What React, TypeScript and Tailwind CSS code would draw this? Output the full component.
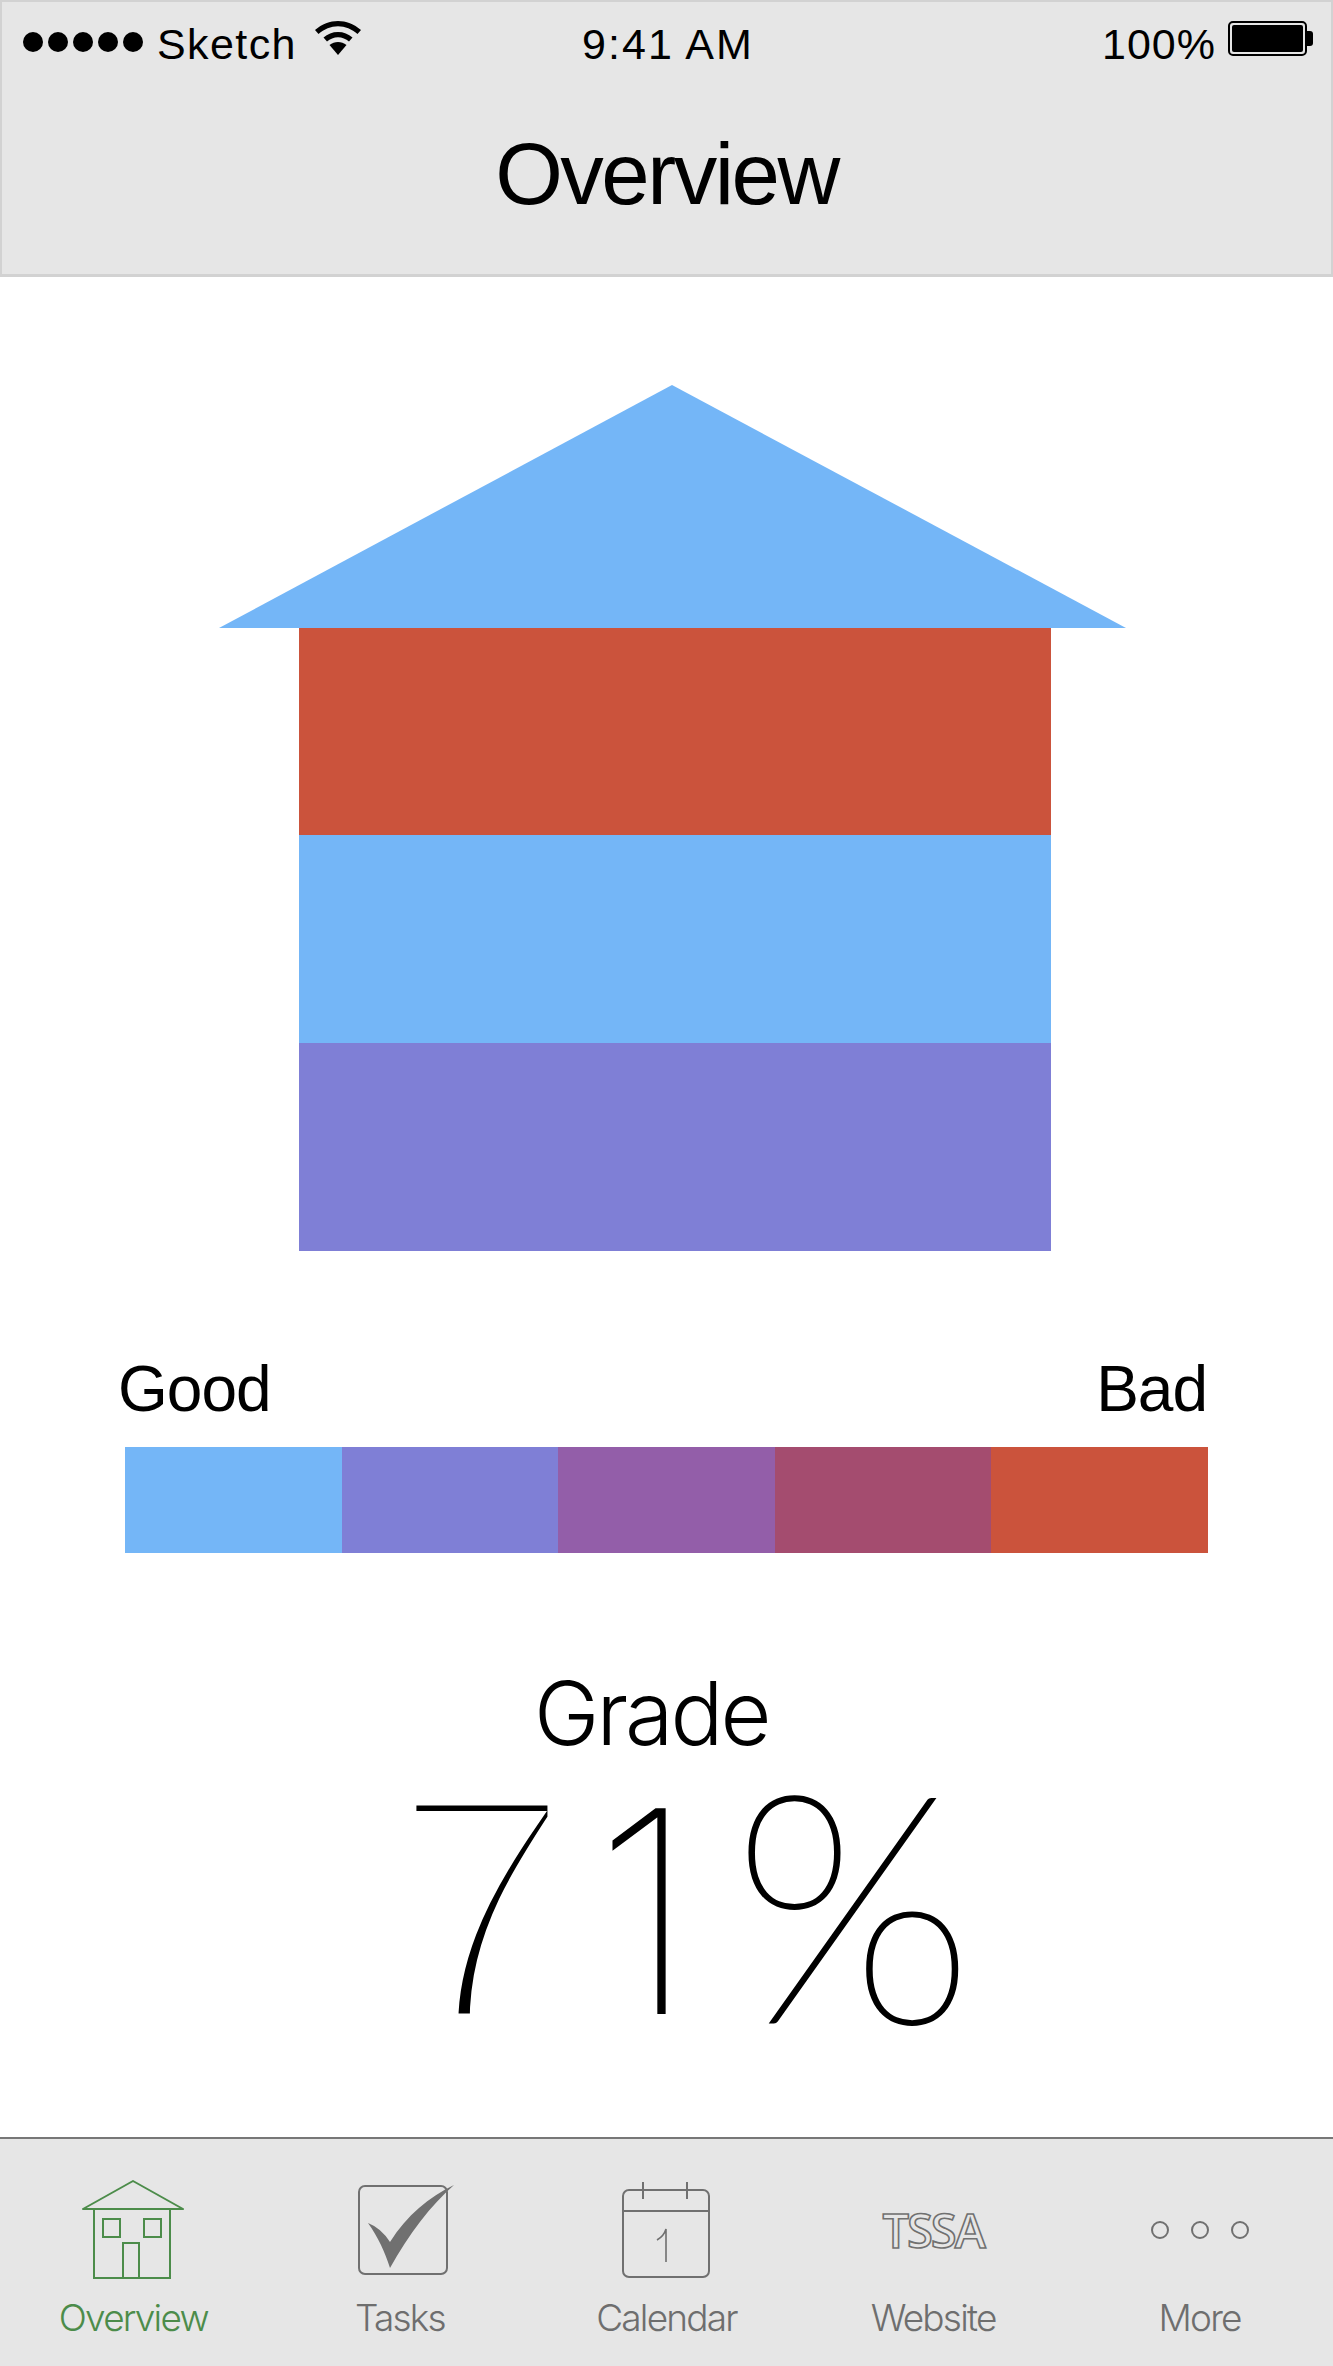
const tabs = [
  { label: 'Overview', active: true, icon: <HouseIcon /> },
  { label: 'Tasks', active: false, icon: <TasksIcon /> },
  { label: 'Calendar', active: false, icon: <CalendarIcon /> },
  { label: 'Website', active: false, icon: <TssaIcon /> },
  { label: 'More', active: false, icon: <MoreIcon /> },
];

const scale = ['bg-[#74b6f7]', 'bg-[#7f7fd6]', 'bg-[#935ea9]', 'bg-[#a44c6f]', 'bg-[#cb533c]'];

function HouseIcon() {
  return (
    <svg width="104" height="100" viewBox="0 0 104 100" fill="none" stroke="#4c8c4a" strokeWidth="2">
      <path d="M2 29 L52 1 L102 29 Z" strokeLinejoin="round" />
      <path d="M13 29 V98 H89 V29" />
      <rect x="22" y="39" width="17" height="18" />
      <rect x="63" y="39" width="17" height="18" />
      <path d="M42 98 V63 H58 V98" />
    </svg>
  );
}

function TasksIcon() {
  return (
    <svg className="ml-[14px]" width="100" height="92" viewBox="0 0 100 92" fill="none">
      <rect x="2" y="2" width="88" height="88" rx="6" stroke="#707070" strokeWidth="2" />
      <path d="M11 39 Q24 44 33 58 C50 31 72 13 97 1 C74 21 52 50 33 84 C28 68 21 53 11 39 Z" fill="#707070" />
    </svg>
  );
}

function CalendarIcon() {
  return (
    <svg width="90" height="98" viewBox="0 0 90 98" fill="none" stroke="#707070" strokeWidth="2">
      <rect x="2" y="9" width="86" height="87" rx="6" />
      <path d="M2 30 H88 M22 1 V18 M66 1 V18" />
      <path d="M36 59 Q43 55 45 48 V81" strokeWidth="1.6" />
    </svg>
  );
}

function TssaIcon() {
  return (
    <span className="text-[47px] leading-none font-semibold tracking-[-2px] text-transparent [-webkit-text-stroke:1.6px_#707070] font-['Open_Sans',sans-serif]">
      TSSA
    </span>
  );
}

function MoreIcon() {
  return (
    <div className="flex gap-[22px]">
      <span className="w-[18px] h-[18px] rounded-full border-2 border-[#707070]" />
      <span className="w-[18px] h-[18px] rounded-full border-2 border-[#707070]" />
      <span className="w-[18px] h-[18px] rounded-full border-2 border-[#707070]" />
    </div>
  );
}

function StatusBar() {
  return (
    <div className="grid grid-cols-3 items-center h-[84px] pl-[21px] pr-[18px] text-[43px] leading-none text-black">
      <div className="flex items-center">
        <div className="flex gap-[5px] -mt-[5px]">
          {[0, 1, 2, 3, 4].map((dot) => (
            <span key={dot} className="w-[20px] h-[20px] rounded-full bg-black" />
          ))}
        </div>
        <span className="ml-[14px] tracking-[1.4px]">Sketch</span>
        <svg className="ml-[18px] -mt-[12px]" width="46" height="34" viewBox="0 0 46 34" fill="#000">
          <path d="M23 0 C31 0 39 3 46 9 L42.5 13 C37 8 30 5.2 23 5.2 C16 5.2 9 8 3.5 13 L0 9 C7 3 15 0 23 0 Z" />
          <path d="M23 11 C28.5 11 33.5 13 37.5 16.6 L34 20.6 C31 18 27 16.3 23 16.3 C19 16.3 15 18 12 20.6 L8.5 16.6 C12.5 13 17.5 11 23 11 Z" />
          <path d="M14.5 24 C17 22 20 21 23 21 C26 21 29 22 31.5 24 L23 34 Z" />
        </svg>
      </div>
      <div className="text-center tracking-[2px]">9:41 AM</div>
      <div className="flex items-center justify-end">
        <span className="tracking-[1px]">100%</span>
        <div className="ml-[12px] -mt-[12px] flex items-center">
          <div className="w-[79px] h-[35px] rounded-[5px] border-2 border-black p-[2px] bg-[#e6e6e6]">
            <div className="w-full h-full rounded-[2px] bg-black" />
          </div>
          <div className="w-[6px] h-[15px] rounded-r-[3px] bg-black" />
        </div>
      </div>
    </div>
  );
}

export default function App() {
  return (
    <div className="flex flex-col w-[1333px] h-[2366px] bg-white font-['Liberation_Sans',Arial,sans-serif]">
      <header className="flex flex-col h-[277px] bg-[#e6e6e6] border-2 border-[#d2d2d2] border-b-[3px]">
        <StatusBar />
        <h1 className="mt-[38px] text-center text-[87px] leading-[100px] font-normal tracking-[-2.5px] text-black">
          Overview
        </h1>
      </header>

      <main className="flex-1 flex flex-col">
        <div className="flex flex-col w-[907px] ml-[219px] mt-[108px]">
          <svg width="907" height="243" viewBox="0 0 907 243" className="block">
            <polygon points="453,0 907,243 0,243" fill="#74b6f7" />
          </svg>
          <div className="ml-[80px] w-[752px]">
            <div className="h-[207px] bg-[#cb533c]" />
            <div className="h-[208px] bg-[#74b6f7]" />
            <div className="h-[208px] bg-[#7f7fd6]" />
          </div>
        </div>

        <div className="flex justify-between ml-[118px] w-[1089px] mt-[103px] text-[64px] leading-[70px] tracking-[-1px] text-black">
          <span>Good</span>
          <span>Bad</span>
        </div>
        <div className="flex ml-[125px] w-[1083px] h-[106px] mt-[23px]">
          {scale.map((color) => (
            <div key={color} className={`flex-1 ${color}`} />
          ))}
        </div>

        <div className="mt-[110px] ml-[534px] text-[88px] leading-[100px] font-light text-black font-['Inter',sans-serif] tracking-[-3px]">
          Grade
        </div>
        <div className="flex items-baseline h-[300px] -mt-[23px] ml-[390px] leading-[300px] text-black">
          <span className="translate-y-[10px] text-[330px] [-webkit-text-stroke:19px_white]">7</span>
          <span className="ml-[20px] text-[280px] font-thin font-['Inter',sans-serif] [-webkit-text-stroke:2px_black]">1</span>
          <span className="ml-[36px] translate-y-[9px] text-[318px] font-thin font-['Lato',sans-serif] [-webkit-text-stroke:3px_black]">%</span>
        </div>
      </main>

      <nav className="grid grid-cols-5 h-[229px] bg-[#e6e6e6] border-t-2 border-[#777777]">
        {tabs.map((tab) => (
          <div key={tab.label} className="flex flex-col items-center">
            <div className="flex items-center justify-center h-[100px] mt-[41px]">{tab.icon}</div>
            <span
              className={`mt-[16px] text-[37px] leading-[44px] font-light font-['Inter',sans-serif] tracking-[-1.8px] ${
                tab.active ? 'text-[#4c8c4a]' : 'text-[#6e6e6e]'
              }`}
            >
              {tab.label}
            </span>
          </div>
        ))}
      </nav>
    </div>
  );
}
